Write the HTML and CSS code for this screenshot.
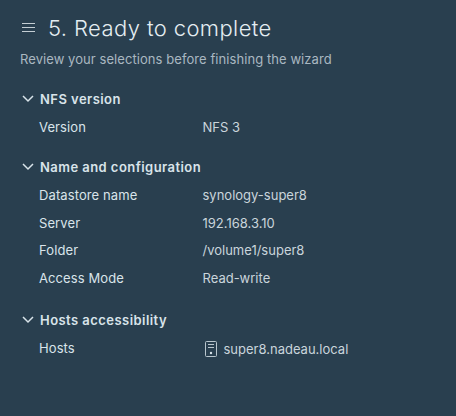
FILE: index.html
```html
<!DOCTYPE html>
<html lang="en">
<head>
    <meta charset="UTF-8">
    <title>Ready to complete</title>
    <link rel="stylesheet" href="styles.css">
</head>
<body>

<div class="header">
    <svg class="menu-icon" width="14" height="12" viewBox="0 0 14 12">
        <path d="M1 1.5H14M1 5.5H14M1 9.5H14" stroke="#c4ced4" stroke-width="1" fill="none"/>
    </svg>
    <h1>5. Ready to complete</h1>
</div>
<p class="subtitle">Review your selections before finishing the wizard</p>

<div class="section nfs">
    <h2><svg class="chevron" width="12" height="8" viewBox="0 0 12 8"><path d="M1 1l5 5 5-5" stroke="#d9e4ea" stroke-width="1.5" fill="none"/></svg>NFS version</h2>
    <div class="row"><span class="label">Version</span><span class="value">NFS 3</span></div>
</div>

<div class="section config">
    <h2><svg class="chevron" width="12" height="8" viewBox="0 0 12 8"><path d="M1 1l5 5 5-5" stroke="#d9e4ea" stroke-width="1.5" fill="none"/></svg>Name and configuration</h2>
    <div class="row"><span class="label">Datastore name</span><span class="value">synology-super8</span></div>
    <div class="row"><span class="label">Server</span><span class="value">192.168.3.10</span></div>
    <div class="row"><span class="label">Folder</span><span class="value">/volume1/super8</span></div>
    <div class="row"><span class="label">Access Mode</span><span class="value">Read-write</span></div>
</div>

<div class="section hosts">
    <h2><svg class="chevron" width="12" height="8" viewBox="0 0 12 8"><path d="M1 1l5 5 5-5" stroke="#d9e4ea" stroke-width="1.5" fill="none"/></svg>Hosts accessibility</h2>
    <div class="row">
        <span class="label">Hosts</span>
        <span class="value host">
            <svg class="host-icon" width="12" height="16" viewBox="0 0 12 16">
                <rect x="0.5" y="0.5" width="11" height="15" rx="1" stroke="#b9c6ce" fill="none"/>
                <path d="M3 3.5H9M3 6.5H9" stroke="#b9c6ce" fill="none"/>
                <circle cx="6" cy="12" r="1.2" fill="#d9e4ea"/>
            </svg>
            super8.nadeau.local
        </span>
    </div>
</div>

</body>
</html>
```

FILE: styles.css
```css
body {
    margin: 0;
    height: 416px;
    overflow: hidden;
    background-color: #293f4f;
    font-family: Inter, "Open Sans", sans-serif;
    font-size: 13px;
    color: #d9e4ea;
}

.header {
    display: flex;
    align-items: center;
    padding: 14px 0 0 21px;
    height: 27px;
}

.menu-icon {
    margin-right: 13px;
}

h1 {
    margin: 0;
    font-size: 22px;
    font-weight: 300;
    letter-spacing: 0.4px;
    color: #e4edf2;
}

.subtitle {
    margin: 8px 0 0 20px;
    line-height: 20px;
    letter-spacing: 0.07px;
    color: #a9b8c1;
}

.section h2 {
    display: flex;
    align-items: center;
    margin: 0 0 9px 0;
    padding-left: 22px;
    line-height: 18px;
    font-size: 13px;
    font-weight: 600;
    letter-spacing: 0.45px;
}

.chevron {
    margin-right: 6px;
}

.nfs {
    margin-top: 21px;
}

.config {
    margin-top: 13px;
}

.hosts {
    margin-top: 14.6px;
}

.row {
    display: flex;
    height: 27.8px;
    line-height: 20px;
    padding-left: 39px;
}

.label {
    width: 163.5px;
    letter-spacing: 0.1px;
}

.value {
    color: #c9d5dc;
}

.host {
    display: flex;
    align-items: flex-start;
    line-height: 23px;
}

.host-icon {
    margin: 3px 7px 0 2px;
}
```
